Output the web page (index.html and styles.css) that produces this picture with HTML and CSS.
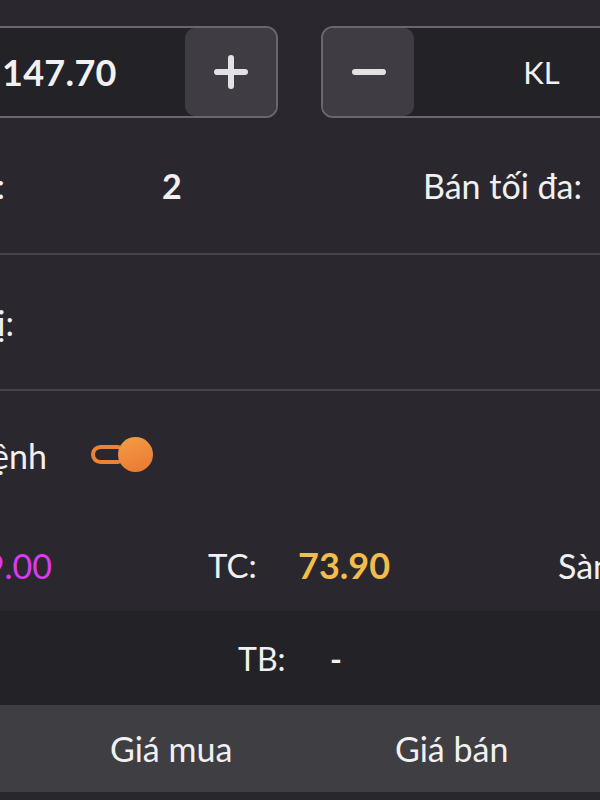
FILE: index.html
```html
<!DOCTYPE html>
<html lang="vi">
<head>
<meta charset="utf-8">
<link rel="stylesheet" href="styles.css">
</head>
<body>
<div class="screen">
  <div class="inputs">
    <div class="box box-price">
      <div class="field field-price">147.70</div>
      <div class="step">
        <svg width="34" height="34" viewBox="0 0 34 34"><path d="M17 3v28M3 17h28" stroke="#e2e1e4" stroke-width="6" stroke-linecap="round"/></svg>
      </div>
    </div>
    <div class="box box-qty">
      <div class="step">
        <svg width="34" height="34" viewBox="0 0 34 34"><path d="M3 17h28" stroke="#e2e1e4" stroke-width="6" stroke-linecap="round"/></svg>
      </div>
      <div class="field field-qty">KL</div>
    </div>
  </div>

  <div class="row row-max">
    <span class="c1">Mua tối đa:</span>
    <span class="c2 bold">2</span>
    <span class="c3">Bán tối đa:</span>
  </div>
  <div class="sep"></div>
  <div class="row row-value">
    <span class="c1">Giá trị:</span>
  </div>
  <div class="sep"></div>
  <div class="row row-confirm">
    <span class="c1">Xác nhận lệnh</span>
    <span class="toggle"><span class="track"></span><span class="thumb"></span></span>
  </div>
  <div class="row row-prices">
    <span class="c1 ceil">79.00</span>
    <span class="tc-lbl">TC:</span>
    <span class="tc-val">73.90</span>
    <span class="floor">Sàn:</span>
  </div>
  <div class="row row-tb">
    <span class="tb-lbl">TB:</span>
    <span class="tb-val">-</span>
  </div>
  <div class="row row-head">
    <span class="h1">Giá mua</span>
    <span class="h2">Giá bán</span>
  </div>
  <div class="bottom"></div>
</div>
</body>
</html>
```
FILE: styles.css
```css
* { box-sizing: border-box; }
html, body { margin: 0; padding: 0; }
body {
  width: 600px;
  height: 800px;
  overflow: hidden;
  background: #2a282e;
  font-family: "Lato", "Noto Sans", sans-serif;
  color: #f1f0f3;
}
.screen { width: 600px; height: 800px; overflow: hidden; }

.inputs {
  display: flex;
  gap: 43px;
  margin-left: -100px;
  padding-top: 26px;
  height: 118px;
}
.box {
  display: flex;
  flex: none;
  height: 92px;
  border: 2px solid #69676d;
  border-radius: 12px;
  background: #232226;
  overflow: hidden;
}
.box-price { width: 378px; }
.box-qty { width: 350px; }
.field {
  flex: 1;
  display: flex;
  align-items: center;
}
.field-price {
  padding-left: 100px;
  font-size: 36px;
  font-weight: 700;
  letter-spacing: 0.3px;
}
.field-qty {
  justify-content: center;
  font-size: 31px;
}
.step {
  width: 91px;
  flex: none;
  display: flex;
  align-items: center;
  justify-content: center;
  background: #3f3d43;
  border-radius: 10px;
}

.row {
  display: flex;
  align-items: center;
  font-size: 34px;
  white-space: nowrap;
}
.bold { font-weight: 700; }
.c1 {
  margin-left: -200px;
  width: 205px;
  text-align: right;
  flex: none;
}
.row-max { height: 135px; }
.row-max .c2 { margin-left: 157px; width: 261px; flex: none; font-size: 34px; }
.sep { height: 2px; background: #47454b; }
.row-value { height: 134px; }
.row-value .c1 { width: 214px; }
.row-confirm { height: 128px; }
.row-confirm .c1 { width: 247px; }
.toggle {
  position: relative;
  margin-left: 44px;
  width: 63px;
  height: 36px;
  flex: none;
}
.track {
  position: absolute;
  left: 0;
  top: 8px;
  width: 36px;
  height: 19px;
  border: 4px solid #e9833a;
  border-radius: 10px;
}
.thumb {
  position: absolute;
  left: 27px;
  top: 0;
  width: 35px;
  height: 35px;
  border-radius: 50%;
  background: linear-gradient(160deg, #f39d48, #e9782f);
}
.row-prices { height: 92px; font-size: 33px; }
.row-prices .c1 { width: 252px; font-size: 34px; }
.ceil { color: #d93cf0; }
.tc-lbl { margin-left: 156px; width: 90px; flex: none; }
.tc-val { color: #f2bd4b; font-weight: 700; font-size: 36px; width: 260px; flex: none; }
.floor { font-size: 34px; }
.row-tb { height: 94px; background: #232226; font-size: 32px; }
.tb-lbl { margin-left: 238px; width: 92px; flex: none; }
.tb-val { font-weight: 700; }
.row-head { height: 87px; background: #3f3e43; font-size: 34px; }
.h1 { margin-left: 110px; width: 285px; flex: none; }
.h2 { flex: none; }
.bottom { height: 8px; background: #29272d; }
```
